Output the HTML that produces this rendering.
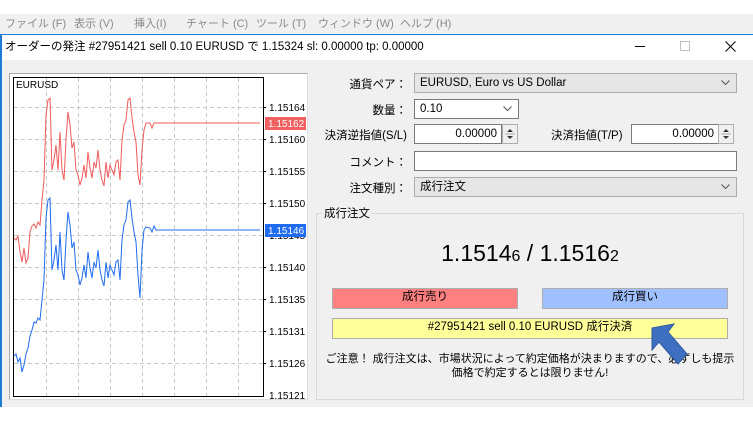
<!DOCTYPE html>
<html><head><meta charset="utf-8"><style>
*{margin:0;padding:0;box-sizing:border-box}
body{width:753px;height:434px;background:#fff;position:relative;overflow:hidden;font-family:"Liberation Sans","Noto Sans CJK JP",sans-serif;font-size:12px;color:#000}
.a{position:absolute}
.menu{top:14px;left:0;width:753px;height:20px;background:#f0f0f0;color:#8a8a8a;font-size:11px;line-height:20px}
.menu span{position:absolute;top:0;white-space:nowrap}
.lbl{position:absolute;text-align:right;width:110px;left:297px;font-size:11.5px}
.box{position:absolute;border:1px solid #7a7a7a;background:#fff;height:20px;line-height:18px;padding-left:5px;font-size:11.5px}
.combo{background:#e5e5e5;border-color:#adadad}
.chev{position:absolute;right:6px;top:6px}
.spin{position:absolute;width:16px;height:20px;border:1px solid #adadad;background:#f0f0f0}
.btn{position:absolute;border:1px solid #adadad;text-align:center;line-height:17px;height:21px;font-size:11.5px}
</style></head><body>
<div class="a menu">
<span style="left:5px">ファイル (F)</span><span style="left:74px">表示 (V)</span><span style="left:134px">挿入(I)</span><span style="left:186px">チャート (C)</span><span style="left:256px">ツール (T)</span><span style="left:318px">ウィンドウ (W)</span><span style="left:400px">ヘルプ (H)</span>
</div>
<div class="a" style="top:34px;left:0;width:753px;height:1px;background:#1e7bd6"></div>
<div class="a" style="top:34px;left:0;width:2px;height:373px;background:#1e7bd6"></div>
<div class="a" style="top:35px;left:2px;width:751px;height:25px;background:#fff;font-size:11.5px;line-height:25px;padding-left:3px">オーダーの発注 #27951421 sell 0.10 EURUSD で 1.15324 sl: 0.00000 tp: 0.00000</div>
<div class="a" style="top:46px;left:635px;width:10px;height:1px;background:#000"></div>
<div class="a" style="top:41px;left:680px;width:10px;height:10px;border:1px solid #c0c0c0"></div>
<svg class="a" style="left:725px;top:41px" width="11" height="11"><path d="M0.5,0.5 L10.5,10.5 M10.5,0.5 L0.5,10.5" stroke="#000" stroke-width="1"/></svg>
<div class="a" style="top:60px;left:2px;width:751px;height:347px;background:#f0f0f0"></div>

<div class="a" style="left:9px;top:73px;width:299px;height:327px;background:#fff;border:1px solid #aaa;border-right-color:#ddd;border-bottom-color:#ddd"></div>
<svg class="a" style="left:0;top:0" width="320" height="410">
<g stroke="#c8c8c8" stroke-dasharray="4,3" stroke-width="1">
<line x1="46.5" y1="78" x2="46.5" y2="396"/><line x1="78.5" y1="78" x2="78.5" y2="396"/><line x1="110.5" y1="78" x2="110.5" y2="396"/><line x1="142.5" y1="78" x2="142.5" y2="396"/><line x1="174.5" y1="78" x2="174.5" y2="396"/><line x1="206.5" y1="78" x2="206.5" y2="396"/><line x1="238.5" y1="78" x2="238.5" y2="396"/>
<line x1="14" y1="107.5" x2="263" y2="107.5"/><line x1="14" y1="139.5" x2="263" y2="139.5"/><line x1="14" y1="171.5" x2="263" y2="171.5"/><line x1="14" y1="203.5" x2="263" y2="203.5"/><line x1="14" y1="235.5" x2="263" y2="235.5"/><line x1="14" y1="267.5" x2="263" y2="267.5"/><line x1="14" y1="299.5" x2="263" y2="299.5"/><line x1="14" y1="331.5" x2="263" y2="331.5"/><line x1="14" y1="363.5" x2="263" y2="363.5"/>
</g>
<rect x="13.5" y="77.5" width="250" height="319" fill="none" stroke="#000"/>
<polyline fill="none" stroke="#f05a5a" stroke-width="1" points="14,238 16,240 18,236 20,252 22,262 24,248 26,263 28,258 30,232 32,226 34,224 36,228 38,222 40,225 42,200 44,180 46,115 48,100 50,98 52,170 54,160 56,145 58,170 60,132 62,170 64,180 66,140 68,112 70,125 72,148 74,142 76,170 78,175 80,185 82,178 84,165 86,178 88,152 90,168 92,178 94,162 96,168 98,150 100,170 102,180 104,186 106,162 108,178 110,165 112,170 114,175 116,162 118,160 120,180 122,140 124,125 126,120 128,100 130,98 132,118 134,132 136,142 138,175 140,185 142,150 144,130 146,123 150,123 152,128 154,123 156,123 260,123"/>
<polyline fill="none" stroke="#1f6cf0" stroke-width="1" points="14,356 16,354 18,362 20,358 22,372 24,365 26,354 28,348 30,336 32,330 34,322 36,323 38,318 40,320 42,300 44,280 46,218 48,200 50,198 52,270 54,260 56,245 58,270 60,232 62,270 64,280 66,240 68,212 70,225 72,248 74,242 76,270 78,275 80,285 82,278 84,265 86,278 88,252 90,268 92,278 94,262 96,268 98,250 100,270 102,280 104,286 106,262 108,278 110,265 112,270 114,275 116,262 118,260 120,280 122,240 124,225 126,220 128,202 130,200 132,218 134,232 136,242 138,275 140,298 142,250 144,230 146,227 150,228 152,232 154,226 156,230 260,230"/>
<g stroke="#000"><line x1="263" y1="107.5" x2="266" y2="107.5"/><line x1="263" y1="139.5" x2="266" y2="139.5"/><line x1="263" y1="171.5" x2="266" y2="171.5"/><line x1="263" y1="203.5" x2="266" y2="203.5"/><line x1="263" y1="267.5" x2="266" y2="267.5"/><line x1="263" y1="299.5" x2="266" y2="299.5"/><line x1="263" y1="331.5" x2="266" y2="331.5"/><line x1="263" y1="363.5" x2="266" y2="363.5"/></g>
<g font-family="Liberation Sans" font-size="10" fill="#000">
<text x="16" y="88">EURUSD</text>
<text x="269" y="111">1.15164</text><text x="269" y="143">1.15160</text><text x="269" y="175">1.15155</text><text x="269" y="207">1.15150</text><text x="269" y="239">1.15145</text><text x="269" y="271">1.15140</text><text x="269" y="303">1.15135</text><text x="269" y="335">1.15131</text><text x="269" y="367">1.15126</text><text x="269" y="399">1.15121</text>
</g>
<rect x="265" y="117" width="41" height="13" fill="#f06060"/><text x="268" y="127" font-family="Liberation Sans" font-size="10" fill="#fff">1.15162</text>
<rect x="265" y="224" width="41" height="13" fill="#1f6cf0"/><text x="268" y="234" font-family="Liberation Sans" font-size="10" fill="#fff">1.15146</text>
</svg>

<div class="lbl" style="top:76px">通貨ペア：</div>
<div class="box combo" style="left:414px;top:73px;width:323px">EURUSD, Euro vs US Dollar<svg class="chev" width="9" height="6"><path d="M0.5,0.5 L4.5,4.5 L8.5,0.5" fill="none" stroke="#555"/></svg></div>
<div class="lbl" style="top:102px">数量：</div>
<div class="box" style="left:414px;top:99px;width:105px">0.10<svg class="chev" width="9" height="6"><path d="M0.5,0.5 L4.5,4.5 L8.5,0.5" fill="none" stroke="#555"/></svg></div>
<div class="lbl" style="top:127px">決済逆指値(S/L)</div>
<div class="box" style="left:414px;top:124px;width:88px;text-align:right;padding-right:4px">0.00000</div>
<div class="spin" style="left:502px;top:124px"><svg width="14" height="18"><path d="M4,7 L7,4 L10,7Z M4,11 L7,14 L10,11Z" fill="#333"/><line x1="2" y1="9" x2="12" y2="9" stroke="#aaa"/></svg></div>
<div class="a" style="left:551px;top:127px;font-size:11.5px">決済指値(T/P)</div>
<div class="box" style="left:631px;top:124px;width:88px;text-align:right;padding-right:4px">0.00000</div>
<div class="spin" style="left:718px;top:124px"><svg width="14" height="18"><path d="M4,7 L7,4 L10,7Z M4,11 L7,14 L10,11Z" fill="#333"/><line x1="2" y1="9" x2="12" y2="9" stroke="#aaa"/></svg></div>
<div class="lbl" style="top:154px">コメント：</div>
<div class="box" style="left:414px;top:151px;width:323px"></div>
<div class="lbl" style="top:180px">注文種別：</div>
<div class="box combo" style="left:414px;top:177px;width:323px">成行注文<svg class="chev" width="9" height="6"><path d="M0.5,0.5 L4.5,4.5 L8.5,0.5" fill="none" stroke="#555"/></svg></div>

<div class="a" style="left:316px;top:213px;width:428px;height:187px;border:1px solid #d8d8d8"></div>
<div class="a" style="left:322px;top:205px;background:#f0f0f0;padding:0 2px;font-size:11.5px">成行注文</div>
<div class="a" style="left:316px;top:238px;width:428px;text-align:center;font-size:23px;line-height:30px">1.1514<span style="font-size:16px">6</span> / 1.1516<span style="font-size:16px">2</span></div>
<div class="btn" style="left:332px;top:288px;width:186px;background:#ff8080">成行売り</div>
<div class="btn" style="left:542px;top:288px;width:186px;background:#a0c0ff">成行買い</div>
<div class="btn" style="left:332px;top:318px;width:396px;background:#ffff99">#27951421 sell 0.10 EURUSD 成行決済</div>
<div class="a" style="left:316px;top:352px;width:428px;text-align:center;line-height:14px;font-size:11px;white-space:nowrap">ご注意！ 成行注文は、市場状況によって約定価格が決まりますので、必ずしも提示<br>価格で約定するとは限りません!</div>
<svg class="a" style="left:640px;top:322px" width="50" height="50"><path d="M12,6 L34,2 L28,10 L47,32 L38,42 L19,20 L12,28 Z" fill="#3f6fc0" stroke="#2d5aa0"/></svg>
</body></html>
